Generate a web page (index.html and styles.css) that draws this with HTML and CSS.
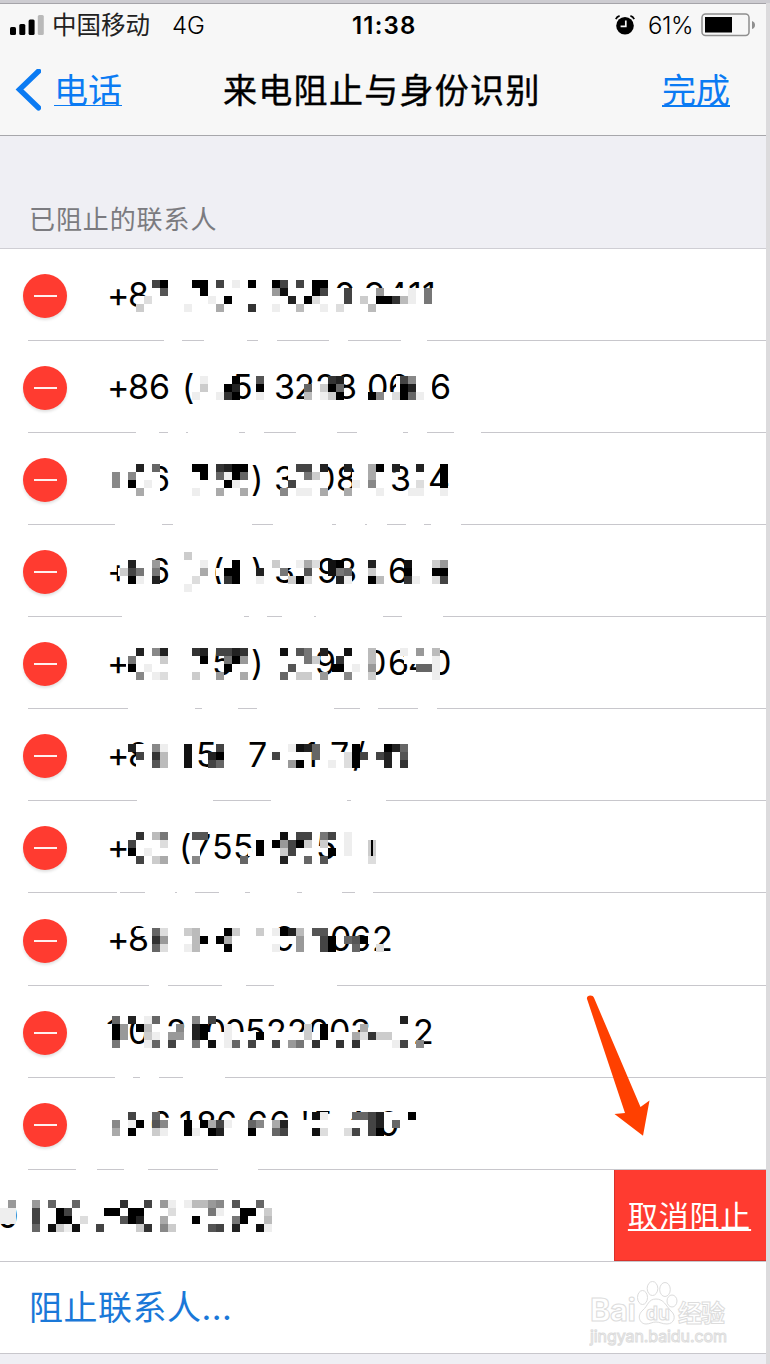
FILE: index.html
```html
<!DOCTYPE html>
<html lang="zh-CN">
<head>
    <meta charset="UTF-8">
    <meta name="viewport" content="width=device-width, initial-scale=1.0">
    <title>来电阻止与身份识别</title>
    <link rel="stylesheet" href="styles.css">
</head>
<body>
    <div class="screen">
        <header>
            <div class="status">
                <svg class="signal" width="34" height="20" viewBox="0 0 34 20">
                    <rect x="0" y="12" width="6" height="8" rx="1.5"/>
                    <rect x="9.3" y="9" width="6" height="11" rx="1.5"/>
                    <rect x="18.6" y="4.5" width="6" height="15.5" rx="1.5"/>
                    <rect x="27.8" y="0" width="6" height="20" rx="1.5" fill="#b9b9b9"/>
                </svg>
                <span class="carrier">中国移动</span>
                <span class="network">4G</span>
                <span class="time">11:38</span>
                <svg class="alarm" width="20" height="20" viewBox="0 0 20 20">
                    <circle cx="10" cy="10.8" r="8.8"/>
                    <path d="M.8 4.2Q2 1.6 4.6.9M19.2 4.2Q18 1.6 15.4.9" fill="none" stroke="#000" stroke-width="1.7"/>
                    <path d="M10.8 5.5V11.3H5.6" fill="none" stroke="#f7f7f7" stroke-width="1.7"/>
                </svg>
                <span class="percent">61%</span>
                <svg class="battery" width="55" height="24" viewBox="0 0 55 24">
                    <rect x="1" y="1" width="47" height="21.5" rx="3.5" fill="none" stroke="#8f8f8f" stroke-width="1.5"/>
                    <rect x="4" y="4" width="27" height="15.5"/>
                    <path d="M51 8q3 1 3 4t-3 4z" fill="#8f8f8f"/>
                </svg>
            </div>
            <nav>
                <a class="back" href="#">
                    <svg width="26" height="44" viewBox="0 0 26 44">
                        <path d="M23.5 2.2 4.5 20.5 23.5 38.8" fill="none" stroke="#0b7bf3" stroke-width="5.4" stroke-linecap="round"/>
                    </svg>
                    <span>电话</span>
                </a>
                <h1>来电阻止与身份识别</h1>
                <a class="done" href="#">完成</a>
            </nav>
        </header>

        <h2>已阻止的联系人</h2>

        <ul id="blockedList" class="list"></ul>

        <svg class="arrow" width="66" height="145" viewBox="0 0 66 145">
            <path d="M1.2 7.5C.2 5 2 3.5 4.3 3.5c2 0 3 .8 3.7 2.3L54.5 115l9-6.5-6.5 35.3-28.5-21.8 10.5-1z"/>
        </svg>

        <div class="watermark">
            <svg width="140" height="76" viewBox="0 0 140 76">
                <g class="wm">
                    <text x="1" y="48" font-size="31" font-weight="700" textLength="46">Bai</text>
                    <ellipse cx="53.5" cy="24.5" rx="5" ry="7"/>
                    <ellipse cx="63.5" cy="15.5" rx="5.3" ry="7"/>
                    <ellipse cx="76" cy="16.5" rx="5.3" ry="7"/>
                    <ellipse cx="83" cy="28" rx="5" ry="6"/>
                    <path d="M67 26c-8 0-8 7-13 11-7 6-3 14 3 14 4 0 6-2 10-2s6 2 11 2c7 0 10-8 4-13-5-5-7-12-15-12z"/>
                    <text x="57" y="47" font-size="19" font-weight="700">du</text>
                    <text x="89" y="49" font-size="24" font-weight="700" textLength="47">经验</text>
                    <text x="1" y="69" font-size="16" font-weight="400" textLength="137">jingyan.baidu.com</text>
                </g>
            </svg>
        </div>
    </div>

    <script src="script.js"></script>
</body>
</html>
```
FILE: styles.css
```css
* {
    box-sizing: border-box;
}
body {
    margin: 0;
    background-color: #dcdbdd;
    border-top: 3px solid #cdccd1;
    font-family: Inter, "Noto Sans CJK SC", sans-serif;
    color: #000;
}
.screen {
    position: relative;
    width: 766px;
    height: 1361px;
    overflow: hidden;
    background-color: #efeff4;
}
header {
    height: 133px;
    background-color: #f7f7f7;
    border-top: 1px solid #a5a4a9;
    border-bottom: 1px solid #a7a7ab;
}
.status {
    display: flex;
    align-items: center;
    height: 42px;
    padding-left: 10px;
    font-size: 24px;
    line-height: 42px;
}
.carrier {
    width: 100px;
    margin-left: 8px;
    font-size: 24.5px;
    font-weight: 400;
    color: #222;
}
.network {
    width: 34px;
    margin-left: 20px;
    padding-top: 1px;
    font-weight: 350;
}
.time {
    width: 66px;
    margin-left: 146px;
    padding-top: 1px;
    font-weight: 600;
    letter-spacing: 1.2px;
}
.alarm {
    margin-left: 197px;
}
.percent {
    width: 48px;
    margin-left: 13px;
    padding-top: 1px;
    font-weight: 350;
    letter-spacing: -0.4px;
}
.battery {
    margin-left: 5px;
}
nav {
    display: grid;
    grid-template-columns: 208px 1fr 100px;
    align-items: center;
    height: 89px;
    padding: 0 36px 0 15px;
    line-height: 50px;
}
nav a {
    color: #0b7bf3;
    font-size: 34px;
    text-underline-offset: 2px;
    text-decoration-thickness: 2px;
}
.back {
    display: flex;
    align-items: center;
    gap: 13px;
    font-weight: 400;
    text-decoration: none;
}
.back span {
    text-decoration: underline 1px;
}
.done {
    text-align: right;
    font-weight: 400;
}
h1 {
    margin: 0;
    font-size: 34px;
    font-weight: 400;
    letter-spacing: 1.3px;
    white-space: nowrap;
    -webkit-text-stroke: 0.4px #000;
}
h2 {
    height: 113px;
    margin: 0;
    padding: 64px 0 0 29px;
    border-bottom: 1px solid #cfced4;
    color: #7b7b80;
    font-size: 26px;
    font-weight: 400;
    line-height: 40px;
    letter-spacing: 0.9px;
}
.list {
    margin: 0;
    padding: 0;
    list-style: none;
}
.row {
    display: grid;
    grid-template-columns: 90px 1fr 152px;
    align-items: center;
    height: 92px;
    background: linear-gradient(#c8c7cc, #c8c7cc) 28px 91px / 100% 1px no-repeat #fff;
}
.row:nth-child(8) {
    height: 93px;
    background-position: 28px 92px;
}
.row.full {
    background-position: 0 91px;
}
.remove {
    grid-area: 1 / 1;
    display: flex;
    align-items: center;
    justify-content: center;
    width: 44px;
    height: 44px;
    margin: 2px 0 0 23px;
    border-radius: 50%;
    background-color: #ff3b30;
    box-shadow: 0 2px 3px rgba(0, 0, 0, 0.12);
}
.remove::before {
    content: "";
    width: 23px;
    height: 2px;
    background-color: #fff0ee;
}
.number {
    grid-area: 1 / 1 / 2 / 4;
    align-self: start;
    font-size: 34px;
    font-weight: 400;
}
.unblock {
    grid-area: 1 / 3;
    align-self: start;
    height: 91px;
    border: 1px solid #d9312a;
    border-width: 0 0 1px 1px;
    background-color: #ff3b30;
    color: #fff;
    font-size: 30px;
    letter-spacing: 0.8px;
    line-height: 93px;
    padding-right: 2px;
    text-align: center;
    text-underline-offset: 2px;
    text-decoration-thickness: 2px;
}
.add {
    grid-area: 1 / 1 / 2 / 4;
    padding: 0 0 5px 29px;
    color: #1a78d8;
    font-size: 34px;
    font-weight: 400;
    letter-spacing: 0.5px;
    text-decoration: none;
}
.arrow {
    position: absolute;
    left: 586px;
    top: 989px;
    fill: #ff4000;
}
.watermark {
    position: absolute;
    left: 589px;
    top: 1270px;
}
.wm {
    fill: #fff;
    stroke: #dcdcdc;
    stroke-width: 1;
}
```
FILE: script.js
```js
const list = document.getElementById('blockedList');
const svgNS = 'http://www.w3.org/2000/svg';

// text: [x, string], top: first line of the mosaic, cells: "x:shade" or "x-end:shade" (0 white ... F black)
// gaps: erased parts of the separator
const rows = [
    {
        text: [[107, '+'], [128, '8'], [334, '0'], [364, '9'], [386, '4'], [408, '1'], [422, '1']],
        top: 31,
        cells: [
            '152:B 160:F 192:F 200:F 216:B 232:1 248:F 272:F 280:B 296:B 312:F 320:F',
            '332-436:0 160:A 200:F 272:6 280:E 312:F 320:B 344:B 376:6 408:1 424:8',
            '139-152:0 332-436:0 144:2 208:1 224:F 288:D 304:F 312:2 344:B 360:3 376:F 384:F 392:C 400:4 408:1 424:8',
            '139-152:0 332-436:0 136:3 184:1 216:5 248:C 272:1 296:4 320:1 336:2 368:4'
        ],
        gaps: [[164, 182], [204, 247], [258, 277], [329, 348], [401, 427]]
    },
    {
        text: [[107, '+'], [128, '8'], [149, '6'], [182, '('], [232, '5'], [274, '3'], [294, '2'], [315, '2'], [336, '8'], [367, '0'], [388, '6'], [430, '6']],
        top: 35,
        cells: [
            '224-238:0 168-172:0 200:1 232:F 256:A 328:C 336:D 396-416:0 400:B 408:7',
            '224-240:0 304-336:0 396-432:0 200:3 224:F 232:D 256:F 304:9 320:3 328:F 336:9 400:F 408:D',
            '224-240:0 304-336:0 368-432:0 192:1 216:1 224:C 232:F 256:1 304:4 320:1 328:3 336:F 368:F 376:7 392:2 400:F 408:9 416:1'
        ],
        gaps: [[136, 159], [168, 186], [188, 239], [245, 264], [296, 337], [357, 403], [408, 427], [454, 481]]
    },
    {
        text: [[149, '6'], [251, ')'], [274, '3'], [314, '0'], [336, '8'], [390, '3'], [428, '4']],
        top: 31,
        cells: [
            '144-160:0 288-328:0 136:D 152:9 192:F 200:F 216:C 224:D 232:F 240:F 296:B 304:B 320:D 344:D 368:5 376:F 392:D 416:D 440:F',
            '144-160:0 288-328:0 352-360:0 112:7 128:7 200:F 216:9 224:1 232:F 240:9 304:8 312:3 368:5 440:F',
            '144-160:0 288-328:0 352-360:0 112:7 128:F 144:1 224:F 232:1 288:B 352:1 368:7 416:2 440:F',
            '144-160:0 288-328:0 352-360:0 136:5 192:1 216:5 240:5 280:7 296:1 304:1 320:5 344:5 376:1 408:1 416:1 440:1'
        ],
        gaps: [[115, 162], [173, 252], [273, 332], [336, 365], [367, 387], [406, 424], [431, 461]]
    },
    {
        text: [[107, '+'], [149, '6'], [212, '('], [251, ')'], [274, '3'], [317, '9'], [336, '8'], [388, '6']],
        top: 27,
        cells: [
            '184:3 268-300:0',
            '144-160:0 270-316:0 128:D 152:6 200:1 232:F 272:3 296:1 304:5 312:2 328:E 336:F 368:D 404:E 432:3 440:6',
            '118-160:0 216-224:0 270-280:0 120:3 128:B 136:8 152:8 200:5 224:F 232:F 256:D 280:8 304:A 328:E 336:8 344:9 368:3 404:F 432:F 440:F',
            '120-160:0 250-272:0 128:F 136:1 152:D 192:2 224:C 232:F 256:1 288:3 296:F 304:2 336:D 344:1 368:F 376:4 404:C 412:1 432:2 440:B',
            '184:1 212-272:0'
        ],
        gaps: [[122, 244], [249, 267], [282, 314], [316, 383], [402, 443]]
    },
    {
        text: [[107, '+'], [212, '5'], [251, ')'], [315, '9'], [365, '0'], [388, '6'], [408, '4'], [430, '0']],
        top: 31,
        cells: [
            '404-440:0 364-376:0 136:D 152:7 160:D 192:C 200:D 216:B 224:B 232:D 240:C 280:E 296:A 304:8 320:D 344:E 368:4 400:1 416:6 432:4',
            '404-440:0 364-376:0 128:8 160:3 200:F 224:8 232:F 240:6 304:8 312:3 336:C 368:4 432:1',
            '126-136:0 364-376:0 128:F 144:1 224:F 288:A 332-344:F 352:1 368:6 416:9 424:9 432:1',
            '364-376:0 404-440:0 136:7 152:1 160:2 192:3 216:6 240:5 280:9 296:3 304:3 320:6 344:7 368:3 432:1'
        ],
        gaps: [[128, 195], [202, 238], [257, 334], [360, 378], [418, 437]]
    },
    {
        text: [[107, '+'], [128, '8'], [196, '5'], [248, '7'], [304, '1'], [330, '7'], [353, '/']],
        top: 35,
        cells: [
            '136-150:0 128:D 152:7 160:1 184:E 216:B 288:1 296:E 304:D 312:9 352:F 384:F 392:D 400:9',
            '138-150:0 332-344:0 136:B 152:C 160:4 184:E 208:D 216:F 272:B 312:9 344:2 352:F 360:B 376:B 384:D 400:A',
            '136-150:0 332-344:0 152:A 160:4 184:E 208:B 216:9 288:6 296:F 328:1 344:2 352:F 384:D 400:C'
        ],
        gaps: [[137, 213], [271, 347], [351, 386]]
    },
    {
        text: [[107, '+'], [179, '('], [192, '7'], [212, '5'], [233, '5'], [316, '5']],
        top: 31,
        cells: [
            '136:C 152:4 160:8 192:A 200:A 280:E 296:B 304:B 320:8 328:B 344:1',
            '190-200:0 128:B 160:2 256:F 272:F 280:6 288:B 296:F 304:3 320:3 344:1 368:3 371-373:F',
            '190-200:0 128:F 144:1 248-252:0 256:F 280:3 288:B 328:F 344:1 368:3 371-373:F',
            '136:B 152:3 160:5 192:7 240:9 280:D 304:9 320:A 368:2'
        ],
        gaps: [[117, 120], [145, 175], [177, 195], [219, 245], [250, 297], [302, 342], [355, 373]]
    },
    {
        text: [[107, '+'], [128, '8'], [274, '9'], [330, '0'], [350, '6'], [372, '2']],
        top: 35,
        cells: [
            '136-150:0 272-296:0 152:9 160:2 184:3 192:4 224:F 232:3 256:3 272:1 280:F 288:D 296:4 312:A 320:A',
            '272-296:0 336-376:0 152:C 160:6 192:4 200:F 216:F 224:5 296:6 320:B 328:F 344:9 352:A 360:F',
            '152:9 160:2 184:1 192:4 224:F 272:1 296:6 320:B 328:F 352:9 376:2'
        ],
        gaps: [[149, 168], [222, 246], [274, 337]]
    },
    {
        text: [[106, '1'], [128, '0'], [166, '2'], [205, '0'], [224, '0'], [245, '5'], [266, '2'], [287, '2'], [308, '0'], [329, '0'], [350, '3'], [413, '2']],
        top: 30,
        cells: [
            '128-144:0 112:9 128:D 144:1 152:9 192:7 208:B 400:D',
            '106-128:0 112:F 120:6 136:F 144:4 176:7 192:D 200:F 224:1 304:3 320:F 360:5',
            '164-414:0 106-128:0 112:F 120:6 144:3 152:1 168:6 176:6 192:D 200:F 224:1 256:F 304:3 320:F 352:5 360:2 368:C 376:3 384:3',
            '164-414:0 112:8 144:1 152:9 168:B 192:8 208:E 224:1 232:9 248:B 272:B 288:6 296:8 312:C 336:C 352:C 392:1 400:B 416:7'
        ],
        gaps: [[115, 133], [140, 159], [183, 225]]
    },
    {
        text: [[150, '6'], [179, '1'], [196, '8'], [216, '6'], [247, '6'], [269, '6'], [300, "'"], [312, '5'], [344, '4'], [378, '0']],
        top: 34,
        cells: [
            '376-400:0 128:B 152:9 312:E 320:1 352:9 360:9 368:B 376:D 408:F',
            '152-172:0 180-400:0 112:7 128:1 136:F 152:A 160:7 184:F 200:F 208:5 216:B 224:1 248:9 256:7 272:5 280:D 368:B 376:D 392:9',
            '150-378:0 112:5 128:F 152:3 160:1 184:F 192:1 208:F 216:D 248:F 272:9 280:B 312:E 320:2 344:2 352:B 368:B 376:F'
        ],
        gaps: [[76, 97], [124, 148], [218, 258]]
    },
    {
        text: [[-3, '0']],
        top: 30,
        action: '取消阻止',
        cells: [
            '0-8:0 8:6 32:6 48:9 72:9 120:C 144:B 160:6 168:1 184:1 192:4 200:4 208:6 216:7 232:A 256:9',
            '0:1 8:1 32:B 56:F 64:B 104:F 112:F 128:F 136:F 168:2 208:8 216:1 240:F 248:F 264:3',
            '0:1 8:1 32:B 56:F 64:F 80:2 120:A 128:F 136:D 160:5 192:F 232:8 240:F 264:4',
            '32:9 48:E 56:3 64:1 72:E 96:B 136:3 144:C 160:7 168:3 208:A 216:B 232:D 256:E 264:1'
        ],
        gaps: []
    }
];

function addRect(svg, x, y, width, height, fill) {
    const rect = document.createElementNS(svgNS, 'rect');
    rect.setAttribute('x', x);
    rect.setAttribute('y', y);
    rect.setAttribute('width', width);
    rect.setAttribute('height', height);
    rect.setAttribute('fill', fill);
    rect.setAttribute('shape-rendering', 'crispEdges');
    svg.appendChild(rect);
}

function drawNumber(row, height) {
    const svg = document.createElementNS(svgNS, 'svg');
    svg.setAttribute('class', 'number');
    svg.setAttribute('width', 614);
    svg.setAttribute('height', height);

    row.text.forEach(([x, str]) => {
        const text = document.createElementNS(svgNS, 'text');
        text.setAttribute('x', x);
        text.setAttribute('y', 57.5);
        text.textContent = str;
        svg.appendChild(text);
    });

    row.cells.forEach((line, i) => {
        line.split(' ').forEach(cell => {
            const [range, shade] = cell.split(':');
            const [x, end] = range.split('-').map(Number);
            const level = 255 - parseInt(shade, 16) * 17;
            addRect(svg, x, row.top + i * 8, (end || x + 8) - x, 8, `rgb(${level},${level},${level})`);
        });
    });

    row.gaps.forEach(([from, to]) => addRect(svg, from, height - 2, to - from, 2, '#fff'));
    return svg;
}

rows.forEach((row, index) => {
    const li = document.createElement('li');
    li.className = row.action ? 'row full' : 'row';
    if (!row.action) {
        li.innerHTML = '<span class="remove"></span>';
    }
    li.appendChild(drawNumber(row, index === 7 ? 93 : 92));
    if (row.action) {
        li.insertAdjacentHTML('beforeend', `<a class="unblock" href="#">${row.action}</a>`);
    }
    list.appendChild(li);
});

list.insertAdjacentHTML('beforeend', '<li class="row full"><a class="add" href="#">阻止联系人...</a></li>');
```
